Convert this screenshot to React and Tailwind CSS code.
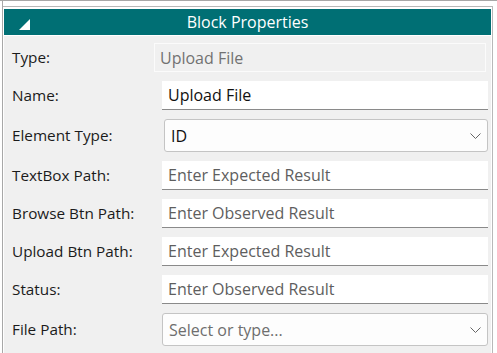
import React from 'react';

const font = { fontFamily: '"Open Sans", "Liberation Sans", sans-serif' };

const Chevron = () => (
  <svg width="11" height="6" viewBox="0 0 11 6" fill="none" className="shrink-0">
    <path d="M0.5 0.5 L5.5 5.5 L10.5 0.5" stroke="#666" strokeWidth="1" />
  </svg>
);

const Row = ({ label, children }) => (
  <div className="flex items-center">
    <div className="w-[150px] shrink-0 text-[15.3px] text-[#1b1b1b]">{label}</div>
    {children}
  </div>
);

const TextField = ({ value, placeholder }) => (
  <div className="flex-1 mr-[3px] h-[29px] bg-white border-b border-[#8a8a8a] flex items-center pl-[6px] text-[16px]">
    {value ? (
      <span className="text-[#111]">{value}</span>
    ) : (
      <span className="text-[#5e5e5e]">{placeholder}</span>
    )}
  </div>
);

const SelectField = ({ value, placeholder, className = '' }) => (
  <div className={`flex-1 mr-[3px] h-[33px] bg-[#fdfdfd] border border-[#c4c4c4] rounded-[3px] flex items-center justify-between pl-[6px] pr-[6px] text-[16px] ${className}`}>
    {value ? (
      <span className="text-[#111]">{value}</span>
    ) : (
      <span className="text-[#6e6e6e]">{placeholder}</span>
    )}
    <Chevron />
  </div>
);

export default function App() {
  return (
    <div className="w-[497px] h-[353px] bg-white overflow-hidden" style={font}>
      <div className="h-px bg-[#a8a8a8]" />
      <div className="ml-[2px] w-[491px] h-[352px] border-l border-[#a8a8a8] pt-[5px]">
        {/* Panel */}
        <div className="h-full border-t border-r border-[#b8b8b8] bg-white pt-[2px] pl-px pr-px">
          {/* Header */}
          <div className="relative h-[26px] bg-[#006f74] flex items-center justify-center">
            <svg width="11" height="11" viewBox="0 0 11 11" className="absolute left-[15px] top-[10px]">
              <polygon points="11,0 11,11 0,11" fill="#ffffff" />
            </svg>
            <span className="text-white text-[16px]">Block Properties</span>
          </div>

          {/* Body */}
          <div className="mt-px h-full bg-[#f0f0f0] pl-[8px] pt-[7px] flex flex-col gap-[9px]">
            <Row label="Type:">
              <div className="flex-1 -ml-[8px] mr-[5px] h-[29px] border border-[#fbfbfb] flex items-center pl-[5px] text-[16px] text-[#727272]">
                Upload File
              </div>
            </Row>
            <Row label="Name:">
              <TextField value="Upload File" />
            </Row>
            <Row label="Element Type:">
              <SelectField value="ID" className="ml-[2px]" />
            </Row>
            <Row label="TextBox Path:">
              <TextField placeholder="Enter Expected Result" />
            </Row>
            <Row label="Browse Btn Path:">
              <TextField placeholder="Enter Observed Result" />
            </Row>
            <Row label="Upload Btn Path:">
              <TextField placeholder="Enter Expected Result" />
            </Row>
            <Row label="Status:">
              <TextField placeholder="Enter Observed Result" />
            </Row>
            <Row label="File Path:">
              <SelectField placeholder="Select or type..." />
            </Row>
          </div>
        </div>
      </div>
    </div>
  );
}
